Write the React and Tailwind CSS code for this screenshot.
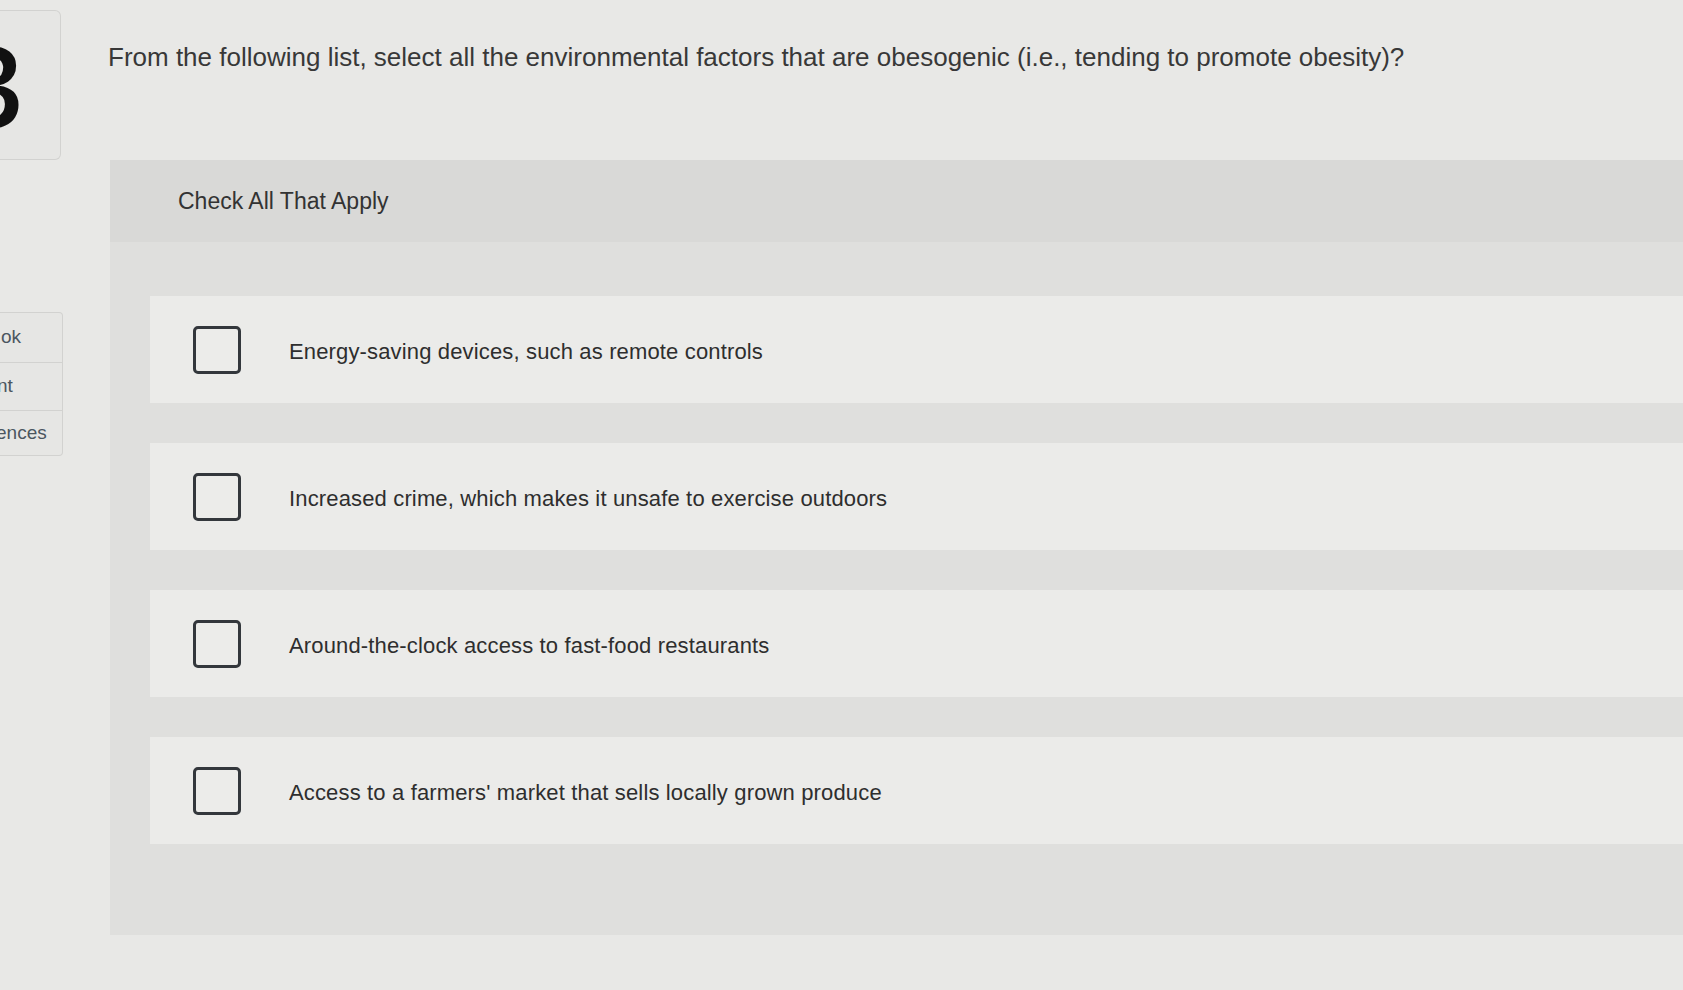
import React from 'react';

const options = [
  'Energy-saving devices, such as remote controls',
  'Increased crime, which makes it unsafe to exercise outdoors',
  'Around-the-clock access to fast-food restaurants',
  "Access to a farmers' market that sells locally grown produce",
];

const OptionRow = ({ label }) => (
  <div className="flex items-center h-[107px] bg-[#ebebe9] pl-[43px]">
    <div className="w-[48px] h-[48px] shrink-0 rounded-[5px] border-[3px] border-[#33373c] bg-[#ececea]"></div>
    <span className="ml-[48px] mt-[4px] text-[22px] tracking-[0.15px] text-[#2e2e2e]">{label}</span>
  </div>
);

const App = () => {
  return (
    <div
      className="w-[1683px] h-[990px] overflow-hidden bg-[#e8e8e6] flex"
      style={{ fontFamily: '"Liberation Sans", Arial, sans-serif' }}
    >
      {/* Left rail, mostly cut off */}
      <div className="w-[63px] shrink-0 flex flex-col">
        <div className="mt-[10px] w-[61px] h-[150px] rounded-r-[6px] border border-l-0 border-[#d2d2d0] bg-[#e6e6e4] overflow-hidden flex items-center">
          <span className="-ml-[40px] text-[112px] leading-none font-semibold text-[#111] font-['Open_Sans',sans-serif]">3</span>
        </div>
        <div className="mt-[152px] w-[63px] rounded-r-[4px] border border-l-0 border-[#d2d2d0] bg-[#e6e6e4] text-[19px] text-[#4b5660] overflow-hidden">
          <div className="h-[50px] flex items-center border-b border-[#d2d2d0] pl-[1px]">ok</div>
          <div className="h-[48px] flex items-center border-b border-[#d2d2d0] -ml-[3px]">nt</div>
          <div className="h-[44px] flex items-center -ml-[4px]">ences</div>
        </div>
      </div>

      {/* Main column */}
      <div className="flex-1 flex flex-col pl-[45px]">
        <h1 className="mt-[40px] text-[26px] leading-[34px] text-[#383838]">
          From the following list, select all the environmental factors that are obesogenic (i.e., tending to promote obesity)?
        </h1>

        <div className="mt-[86px] ml-[2px] h-[775px] bg-[#dfdfdd] flex flex-col">
          <div className="h-[82px] bg-[#d9d9d7] flex items-center pl-[68px]">
            <span className="text-[23px] text-[#333]">Check All That Apply</span>
          </div>
          <div className="pl-[40px] pt-[54px] flex flex-col gap-[40px]">
            {options.map((o) => (
              <OptionRow key={o} label={o} />
            ))}
          </div>
        </div>
      </div>
    </div>
  );
};

export default App;
